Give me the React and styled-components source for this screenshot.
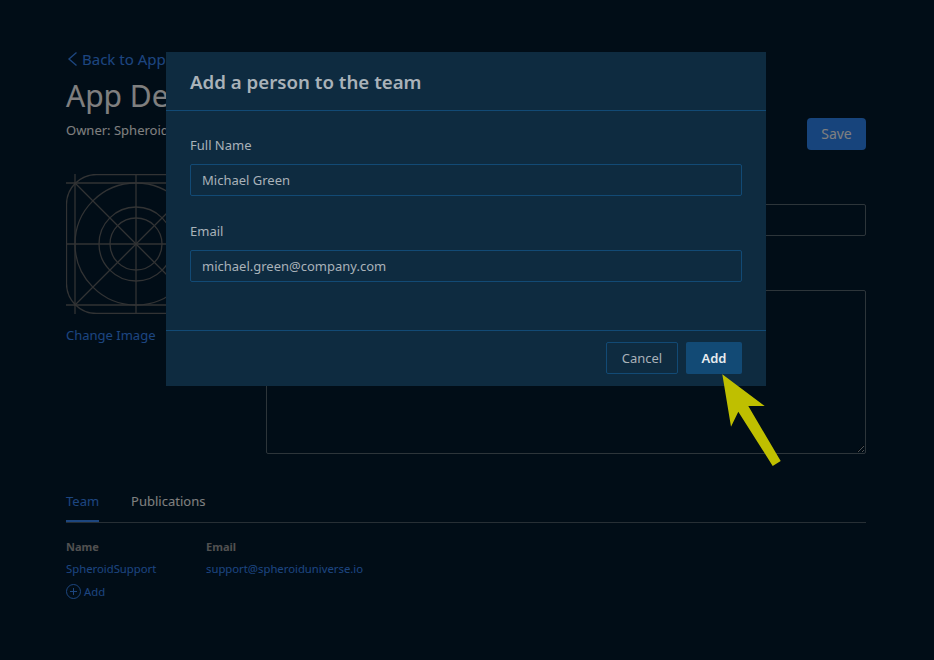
import React from "react";
import styled, { createGlobalStyle } from "styled-components";

const GlobalStyle = createGlobalStyle`
  html, body {
    margin: 0;
    padding: 0;
    height: 100%;
    background: #021a2e;
    font-family: "Noto Sans", "Open Sans", sans-serif;
    overflow: hidden;
  }
`;

const ICON_LINES = [
  [70, 0, 70, 140],
  [0, 70, 140, 70],
  [9, 0, 9, 140],
  [0, 9, 140, 9],
  [0, 131, 140, 131],
  [131, 0, 131, 140],
  [9, 9, 131, 131],
  [131, 9, 9, 131],
];

const App = () => {
  return (
    <>
      <GlobalStyle />
      <Page>
        <BackLink href="#">
          <svg width="12" height="16" viewBox="0 0 12 16" fill="none" stroke="currentColor" strokeWidth="1.4">
            <path d="M10.5 1.5 L3 8 L10.5 14.5" />
          </svg>
          Back to Apps
        </BackLink>
        <TitleRow>
          <div>
            <Title>App Details</Title>
            <Owner>Owner: SpheroidSupport</Owner>
          </div>
          <SaveButton>Save</SaveButton>
        </TitleRow>
        <FormRow>
          <ImageColumn>
            <svg width="140" height="140" viewBox="0 0 140 140" fill="none" stroke="#646668" strokeWidth="1.3">
              <rect x="0.5" y="0.5" width="139" height="139" rx="30" />
              {ICON_LINES.map((l, i) => (
                <line key={i} x1={l[0]} y1={l[1]} x2={l[2]} y2={l[3]} />
              ))}
              <circle cx="70" cy="70" r="26" />
              <circle cx="70" cy="70" r="37" />
              <circle cx="70" cy="70" r="61" />
            </svg>
            <ChangeImage href="#">Change Image</ChangeImage>
          </ImageColumn>
          <Fields>
            <FieldLabel>Name</FieldLabel>
            <DarkInput defaultValue="" />
            <FieldLabel>Description</FieldLabel>
            <DarkTextarea defaultValue="" />
          </Fields>
        </FormRow>
        <Tabs>
          <Tab $active>Team</Tab>
          <Tab>Publications</Tab>
        </Tabs>
        <TeamTable>
          <HeadCell>Name</HeadCell>
          <HeadCell>Email</HeadCell>
          <LinkCell>SpheroidSupport</LinkCell>
          <LinkCell>support@spheroiduniverse.io</LinkCell>
        </TeamTable>
        <AddLink href="#">
          <svg width="15" height="15" viewBox="0 0 15 15" fill="none" stroke="currentColor" strokeWidth="1">
            <circle cx="7.5" cy="7.5" r="7" />
            <path d="M7.5 4V11M4 7.5H11" />
          </svg>
          Add
        </AddLink>
      </Page>

      <Backdrop />

      <Modal>
        <ModalHeader>Add a person to the team</ModalHeader>
        <ModalBody>
          <ModalField>
            <ModalLabel>Full Name</ModalLabel>
            <ModalInput defaultValue="Michael Green" />
          </ModalField>
          <ModalField>
            <ModalLabel>Email</ModalLabel>
            <ModalInput defaultValue="michael.green@company.com" />
          </ModalField>
        </ModalBody>
        <ModalFooter>
          <CancelButton>Cancel</CancelButton>
          <AddButton>Add</AddButton>
        </ModalFooter>
      </Modal>

      <Arrow width="934" height="660" viewBox="0 0 934 660">
        <path
          d="M722.3 374.3 L764.7 406 L748.3 406 L780.7 461 L772.7 466 L738.3 411.7 L731 426.7 Z"
          fill="#bfbf00"
        />
      </Arrow>
    </>
  );
};

export default App;

const Page = styled.div`
  width: 866px;
  height: 660px;
  box-sizing: border-box;
  padding: 49px 0 0 66px;
  color: #fff;
  font-size: 14px;
`;

const BackLink = styled.a`
  display: flex;
  align-items: center;
  gap: 4px;
  height: 19px;
  color: #3a8cff;
  font-size: 15px;
  text-decoration: none;
`;

const TitleRow = styled.div`
  display: flex;
  justify-content: space-between;
  align-items: flex-start;
  margin-top: 7px;
`;

const Title = styled.h1`
  margin: 0;
  font-size: 30px;
  line-height: 41px;
  font-weight: 400;
  color: #fff;
`;

const Owner = styled.div`
  font-size: 13px;
  line-height: 18px;
  margin-top: 5px;
  color: #fff;
`;

const SaveButton = styled.button`
  width: 59px;
  height: 32px;
  margin-top: 43px;
  padding: 0 0 2px;
  border: 0;
  border-radius: 4px;
  background: #2e88f8;
  color: #fff;
  font-family: inherit;
  font-size: 14px;
`;

const FormRow = styled.div`
  display: flex;
  margin-top: 24px;
`;

const ImageColumn = styled.div`
  width: 200px;
  flex: none;
  svg {
    display: block;
  }
`;

const ChangeImage = styled.a`
  display: block;
  margin-top: 12px;
  color: #3a8cff;
  font-size: 13px;
  line-height: 19px;
  text-decoration: none;
`;

const Fields = styled.div`
  flex: 1;
  display: flex;
  flex-direction: column;
`;

const FieldLabel = styled.label`
  font-size: 13px;
  line-height: 18px;
  margin: 6px 0 6px;
  color: #fff;
`;

const DarkInput = styled.input`
  box-sizing: border-box;
  height: 32px;
  background: transparent;
  border: 1px solid #5a6a75;
  border-radius: 2px;
  margin-bottom: 24px;
`;

const DarkTextarea = styled.textarea`
  box-sizing: border-box;
  height: 164px;
  background: transparent;
  border: 1px solid #5a6a75;
  border-radius: 2px;
  color-scheme: dark;
`;

const Tabs = styled.div`
  display: flex;
  gap: 32px;
  margin-top: 37px;
  border-bottom: 1px solid #4e5e6a;
`;

const Tab = styled.div`
  box-sizing: border-box;
  height: 31px;
  padding-top: 1px;
  line-height: 19px;
  font-size: 13px;
  color: ${(p) => (p.$active ? "#3a8cff" : "#fff")};
  box-shadow: ${(p) => (p.$active ? "inset 0 -2px 0 #3a8cff" : "none")};
`;

const TeamTable = styled.div`
  display: grid;
  grid-template-columns: 140px 1fr;
  margin-top: 16px;
  row-gap: 6px;
`;

const HeadCell = styled.div`
  font-size: 11px;
  line-height: 15px;
  font-weight: 700;
  color: #a0a0a0;
`;

const LinkCell = styled.div`
  font-size: 11.3px;
  line-height: 17px;
  color: #3a8cff;
`;

const AddLink = styled.a`
  display: flex;
  align-items: center;
  gap: 3px;
  margin-top: 7px;
  color: #3a8cff;
  font-size: 11.3px;
  text-decoration: none;
`;

const Backdrop = styled.div`
  position: fixed;
  inset: 0;
  background: rgba(0, 0, 0, 0.5);
`;

const Modal = styled.div`
  position: fixed;
  left: 166px;
  top: 52px;
  width: 600px;
  height: 334px;
  display: flex;
  flex-direction: column;
  background: #0e2b40;
  color: #a9b2b9;
`;

const ModalHeader = styled.div`
  box-sizing: border-box;
  height: 59px;
  padding: 0 24px;
  display: flex;
  align-items: center;
  border-bottom: 1px solid #124a75;
  font-size: 18.7px;
  font-weight: 600;
  color: #a9b2b9;
`;

const ModalBody = styled.div`
  flex: 1;
  padding: 25px 24px 0;
  display: flex;
  flex-direction: column;
  gap: 26px;
`;

const ModalField = styled.div`
  display: flex;
  flex-direction: column;
  gap: 10px;
`;

const ModalLabel = styled.label`
  font-size: 13px;
  line-height: 18px;
  color: #a9b2b9;
`;

const ModalInput = styled.input`
  box-sizing: border-box;
  height: 32px;
  padding: 0 11px;
  background: transparent;
  border: 1px solid #124a75;
  border-radius: 2px;
  color: #a9b2b9;
  font-family: inherit;
  font-size: 13px;
  outline: none;
`;

const ModalFooter = styled.div`
  box-sizing: border-box;
  height: 56px;
  padding: 0 24px 2px;
  display: flex;
  justify-content: flex-end;
  align-items: center;
  gap: 8px;
  border-top: 1px solid #124a75;
`;

const CancelButton = styled.button`
  width: 72px;
  height: 32px;
  background: transparent;
  border: 1px solid #124a75;
  border-radius: 2px;
  color: #a9b2b9;
  font-family: inherit;
  font-size: 13px;
`;

const AddButton = styled.button`
  width: 56px;
  height: 32px;
  background: #124a75;
  border: 0;
  border-radius: 2px;
  color: #e8ecef;
  font-family: inherit;
  font-size: 13px;
  font-weight: 600;
`;

const Arrow = styled.svg`
  position: fixed;
  left: 0;
  top: 0;
  pointer-events: none;
`;
